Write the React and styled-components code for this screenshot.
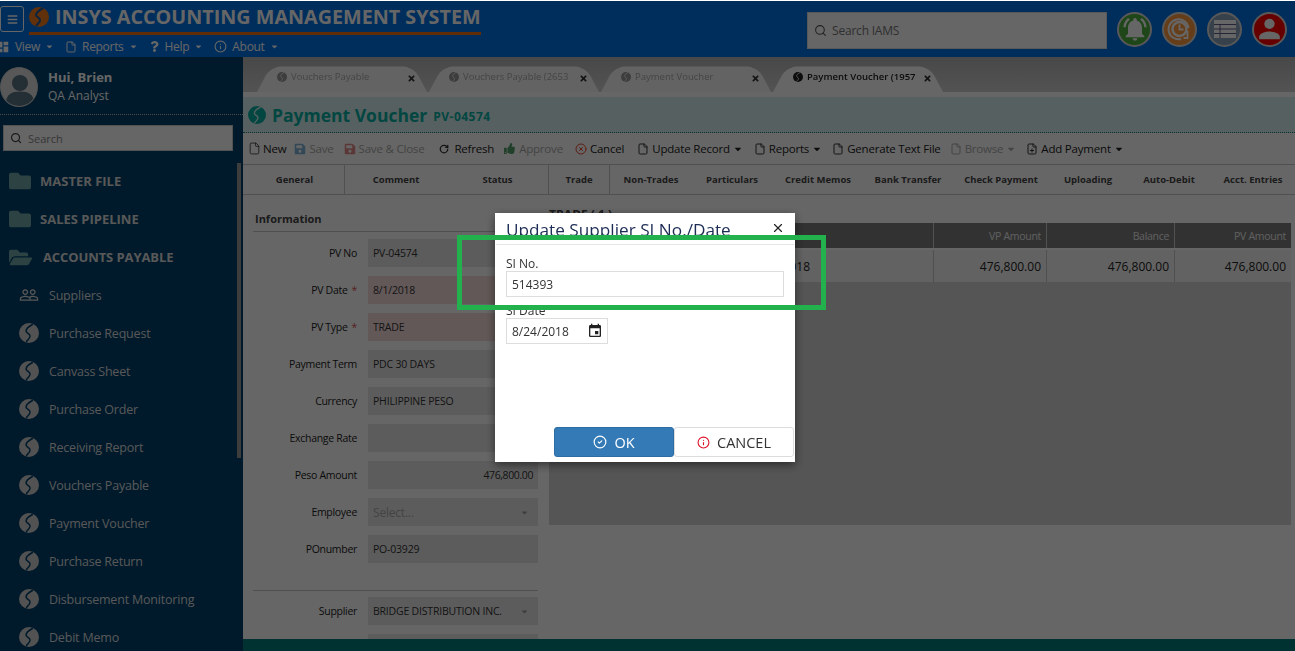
import React from "react"
import styled, { createGlobalStyle } from "styled-components"
import { MdDashboard, MdNotificationsActive, MdPerson, MdPeopleOutline, MdEvent } from "react-icons/md"
import { FaBars, FaFolder, FaFolderOpen, FaQuestion, FaSave, FaThumbsUp, FaTimes, FaCaretDown } from "react-icons/fa"
import { File, FilePlus, Info, Search, RotateCw, CircleX, CircleCheck, X } from "lucide-react"

const GlobalStyle = createGlobalStyle`
  html, body {
    margin: 0;
    padding: 0;
    height: 100%;
    overflow: hidden;
    font-family: "Open Sans", "Liberation Sans", sans-serif;
    background: #fff;
  }
  * { box-sizing: border-box; }
`

function Globe({ size = 14, color = "#4a7f8a", swoosh = "#fff", weight = 1.5 }) {
  return (
    <svg width={size} height={size} viewBox="0 0 20 20" style={{ flex: "none" }}>
      <circle cx="10" cy="10" r="10" fill={color} />
      <path
        d="M13.5 1.5 C9.5 3.5 6 6.5 7.5 9 C9 11 11.5 11 11 13.5 C10.7 15.5 9 16.5 7.5 18.5"
        fill="none"
        stroke={swoosh}
        strokeWidth={weight}
        strokeLinecap="round"
      />
    </svg>
  )
}

const docTabs = [
  { label: "Vouchers Payable" },
  { label: "Vouchers Payable (2653" },
  { label: "Payment Voucher" },
  { label: "Payment Voucher (1957", active: true },
]

const tools = [
  { label: "New", icon: <File size={13} color="#333" strokeWidth={1.5} />, gap: 8 },
  { label: "Save", icon: <FaSave size={12} color="#7fb3d9" />, muted: true, gap: 10 },
  { label: "Save & Close", icon: <FaSave size={12} color="#e58a8a" />, muted: true, gap: 15 },
  { label: "Refresh", icon: <RotateCw size={10} color="#333" strokeWidth={3} />, gap: 10 },
  { label: "Approve", icon: <FaThumbsUp size={11} color="#53a06b" />, muted: true, gap: 12 },
  { label: "Cancel", icon: <CircleX size={12} color="#e5482f" />, gap: 13 },
  { label: "Update Record", icon: <File size={12} color="#333" />, caret: true, gap: 11 },
  { label: "Reports", icon: <File size={12} color="#333" />, caret: true, gap: 10 },
  { label: "Generate Text File", icon: <File size={12} color="#333" />, gap: 9 },
  { label: "Browse", icon: <File size={12} color="#aaa" />, muted: true, caret: true, gap: 10 },
  { label: "Add Payment", icon: <FilePlus size={12} color="#333" />, caret: true, gap: 0 },
]

const sections = [
  { label: "General", width: 100, line: true },
  { label: "Comment", width: 102 },
  { label: "Status", width: 102, line: true },
  { label: "Trade", width: 61, active: true, line: true },
  { label: "Non-Trades", width: 82 },
  { label: "Particulars", width: 80 },
  { label: "Credit Memos", width: 92 },
  { label: "Bank Transfer", width: 88 },
  { label: "Check Payment", width: 98 },
  { label: "Uploading", width: 76 },
  { label: "Auto-Debit", width: 86 },
  { label: "Acct. Entries", width: 82 },
]

const fields = [
  { label: "PV No", value: "PV-04574" },
  { label: "PV Date", value: "8/1/2018", required: true },
  { label: "PV Type", value: "TRADE", required: true },
  { label: "Payment Term", value: "PDC 30 DAYS" },
  { label: "Currency", value: "PHILIPPINE PESO" },
  { label: "Exchange Rate", value: "" },
  { label: "Peso Amount", value: "476,800.00", right: true },
  { label: "Employee", value: "Select...", select: true, placeholder: true },
  { label: "POnumber", value: "PO-03929" },
]

const menuLinks = [
  "Purchase Request",
  "Canvass Sheet",
  "Purchase Order",
  "Receiving Report",
  "Vouchers Payable",
  "Payment Voucher",
  "Purchase Return",
  "Disbursement Monitoring",
  "Debit Memo",
]

export default function App() {
  return (
    <Page>
      <GlobalStyle />
      <Header>
        <HeaderLeft>
          <BrandRow>
            <MenuButton><FaBars size={11} color="#fff" /></MenuButton>
            <Brand>
              <Globe size={20} color="#f07a1c" swoosh="#1c5aa0" weight={2} />
              <BrandText>INSYS ACCOUNTING MANAGEMENT SYSTEM</BrandText>
            </Brand>
          </BrandRow>
          <TopNav>
            <NavItem $first><MdDashboard size={14} /> <span>View</span> <FaCaretDown size={9} /></NavItem>
            <NavItem><File size={12} /> <span>Reports</span> <FaCaretDown size={9} /></NavItem>
            <NavItem><FaQuestion size={11} /> <span>Help</span> <FaCaretDown size={9} /></NavItem>
            <NavItem><Info size={13} /> <span>About</span> <FaCaretDown size={9} /></NavItem>
          </TopNav>
        </HeaderLeft>
        <HeaderRight>
          <GlobalSearch>
            <Search size={13} color="#555" />
            <span>Search IAMS</span>
          </GlobalSearch>
          <RoundIcon $bg="#4baf3e"><MdNotificationsActive size={28} color="#fff" /></RoundIcon>
          <RoundIcon $bg="#ff9a40">
            <svg width="26" height="26" viewBox="0 0 26 26">
              <circle cx="12.5" cy="13" r="7" fill="none" stroke="#fff" strokeWidth="2.4" />
              <path d="M12.5 8.5 V13.5 H16.5" fill="none" stroke="#fff" strokeWidth="1.8" />
              <path d="M21.5 12 A10 10 0 1 0 14 23" fill="none" stroke="#fff" strokeWidth="2" />
              <path d="M20.5 15 V22 H16.5" fill="none" stroke="#fff" strokeWidth="1.8" />
            </svg>
          </RoundIcon>
          <RoundIcon $bg="#89a2bb">
            <svg width="22" height="18" viewBox="0 0 22 18">
              <rect width="22" height="18" fill="#fff" />
              <path d="M0 4.5 H22 M0 9 H22 M0 13.5 H22 M6 4.5 V18" stroke="#5a5f8a" strokeWidth="1" fill="none" />
            </svg>
          </RoundIcon>
          <RoundIcon $bg="#ff0000"><MdPerson size={32} color="#fff" /></RoundIcon>
        </HeaderRight>
      </Header>

      <Body>
        <Sidebar>
          <Profile>
            <Avatar>
              <svg width="38" height="40" viewBox="0 0 38 40">
                <circle cx="19" cy="15" r="8" fill="#5a7384" />
                <path d="M5 35 C5 26 11 23.5 19 23.5 C27 23.5 33 26 33 35 C29 39 9 39 5 35 Z" fill="#5a7384" />
              </svg>
            </Avatar>
            <div>
              <ProfileName>Hui, Brien</ProfileName>
              <ProfileRole>QA Analyst</ProfileRole>
            </div>
          </Profile>
          <SideSearch>
            <Search size={12} color="#444" strokeWidth={2.5} />
            <span>Search</span>
          </SideSearch>
          <SideMenu>
            <GroupItem><FaFolder size={22} color="#70a8a8" /><GroupLabel>MASTER FILE</GroupLabel></GroupItem>
            <GroupItem><FaFolder size={22} color="#70a8a8" /><GroupLabel>SALES PIPELINE</GroupLabel></GroupItem>
            <GroupItem><FaFolderOpen size={23} color="#70a8a8" /><GroupLabel $open>ACCOUNTS PAYABLE</GroupLabel></GroupItem>
            <LinkItem>
              <MdPeopleOutline size={20} color="#ddd" />
              <span>Suppliers</span>
            </LinkItem>
            {menuLinks.map((name) => (
              <LinkItem key={name}>
                <Globe size={20} color="#ccc" swoosh="#00416b" />
                <span>{name}</span>
              </LinkItem>
            ))}
          </SideMenu>
          <ScrollThumb />
        </Sidebar>

        <Main>
          <TabStrip>
            {docTabs.map((t) => (
              <DocTab key={t.label} $active={t.active}>
                <Globe size={10} color={t.active ? "#222" : "#999"} />
                <DocTabLabel $active={t.active}>{t.label}</DocTabLabel>
                <FaTimes size={9} color="#333" />
              </DocTab>
            ))}
          </TabStrip>
          <TitleBar>
            <Globe size={18} color="#06b0a5" swoosh="#d6f0f0" />
            <PageTitle>Payment Voucher</PageTitle>
            <PageCode>PV-04574</PageCode>
          </TitleBar>
          <Toolbar>
            {tools.map((t) => (
              <Tool key={t.label} $muted={t.muted} $gap={t.gap}>
                <ToolIcon>{t.icon}</ToolIcon>
                <span>{t.label}</span>
                {t.caret && <FaCaretDown size={10} />}
              </Tool>
            ))}
          </Toolbar>
          <SectionTabs>
            {sections.map((s) => (
              <SectionTab key={s.label} $width={s.width} $line={s.line} $active={s.active}>
                {s.label}
              </SectionTab>
            ))}
          </SectionTabs>
          <Content>
            <FormColumn>
              <FormHeading>Information</FormHeading>
              {fields.map((f) => (
                <FieldRow key={f.label}>
                  <FieldLabel>
                    {f.label}
                    {f.required && <Required>*</Required>}
                  </FieldLabel>
                  <FieldValue $required={f.required} $right={f.right} $placeholder={f.placeholder}>
                    {f.value}
                    {f.select && <FaCaretDown size={9} color="#999" />}
                  </FieldValue>
                </FieldRow>
              ))}
              <FormDivider />
              <FieldRow>
                <FieldLabel>Supplier</FieldLabel>
                <FieldValue>
                  BRIDGE DISTRIBUTION INC.
                  <FaCaretDown size={9} color="#999" />
                </FieldValue>
              </FieldRow>
              <FieldRow>
                <FieldLabel />
                <FieldValue />
              </FieldRow>
            </FormColumn>
            <TableColumn>
              <TableTitle>TRADE ( 1 )</TableTitle>
              <GridHead>
                <HeadCell $plain />
                <HeadCell />
                <HeadCell>VP Amount</HeadCell>
                <HeadCell>Balance</HeadCell>
                <HeadCell>PV Amount</HeadCell>
              </GridHead>
              <GridRow>
                <DataCell $plain>8/24/2018</DataCell>
                <DataCell />
                <DataCell>476,800.00</DataCell>
                <DataCell>476,800.00</DataCell>
                <DataCell>476,800.00</DataCell>
              </GridRow>
              <GridEmpty />
            </TableColumn>
          </Content>
          <Footer />
        </Main>
      </Body>

      <Backdrop />

      <Modal>
        <ModalHeader>
          <ModalTitle>Update Supplier SI No./Date</ModalTitle>
          <X size={14} color="#222" strokeWidth={2} />
        </ModalHeader>
        <ModalBody>
          <ModalLabel>SI No.</ModalLabel>
          <ModalInput>514393</ModalInput>
          <ModalLabel $second>SI Date</ModalLabel>
          <DateInput>
            8/24/2018
            <MdEvent size={16} color="#222" />
          </DateInput>
        </ModalBody>
        <ModalFooter>
          <PrimaryButton><CircleCheck size={14} /> OK</PrimaryButton>
          <GhostButton><Info size={13} color="#e0102a" /> CANCEL</GhostButton>
        </ModalFooter>
      </Modal>

      <Highlight />
    </Page>
  )
}

const Page = styled.div`
  position: relative;
  width: 100%;
  height: 100vh;
  overflow: hidden;
  display: flex;
  flex-direction: column;
  border-top: 1px solid #fff;
  background: #fff;
`

const Header = styled.header`
  flex: none;
  height: 56px;
  background: #0073e6;
  display: flex;
  justify-content: space-between;
  color: #fff;
`

const HeaderLeft = styled.div`
  display: flex;
  flex-direction: column;
`

const BrandRow = styled.div`
  display: flex;
  padding-top: 5px;
  gap: 5px;
`

const MenuButton = styled.div`
  width: 24px;
  height: 26px;
  border: 1px solid #fff;
  border-radius: 3px;
  display: flex;
  align-items: center;
  justify-content: center;
`

const Brand = styled.div`
  display: flex;
  align-items: center;
  gap: 6px;
  height: 29px;
  padding-bottom: 5px;
  border-bottom: 3px solid #f07010;
`

const BrandText = styled.div`
  font-size: 19.75px;
  font-weight: 700;
  color: #fff;
  line-height: 20px;
  white-space: nowrap;
`

const TopNav = styled.nav`
  display: flex;
  align-items: center;
  height: 24px;
  margin-top: 1px;
`

const NavItem = styled.div`
  display: flex;
  align-items: center;
  gap: 5px;
  font-size: 12px;
  letter-spacing: -0.3px;
  margin-left: ${(p) => (p.$first ? "-4px" : "11px")};
`

const HeaderRight = styled.div`
  display: flex;
  align-items: center;
  gap: 10px;
  padding: 0 8px 0 0;
`

const GlobalSearch = styled.div`
  width: 300px;
  height: 37px;
  margin-top: 3px;
  background: #fff;
  border: 1px solid #ddd;
  display: flex;
  align-items: center;
  gap: 5px;
  padding: 0 6px;
  font-size: 12px;
  letter-spacing: -0.2px;
  color: #777;
`

const RoundIcon = styled.div`
  width: 35px;
  height: 35px;
  border-radius: 50%;
  background: ${(p) => p.$bg};
  border: 2px solid #ddd;
  display: flex;
  align-items: center;
  justify-content: center;
  overflow: hidden;
`

const Body = styled.div`
  flex: 1;
  min-height: 0;
  display: flex;
`

const Sidebar = styled.aside`
  position: relative;
  flex: none;
  width: 243px;
  background: #00416b;
  color: #fff;
  overflow: hidden;
`

const Profile = styled.div`
  height: 58px;
  margin-bottom: 10px;
  display: flex;
  align-items: flex-start;
  gap: 10px;
  padding-top: 10px;
  border-bottom: 1px dotted #bbb;
`

const Avatar = styled.div`
  width: 38px;
  height: 40px;
  border-radius: 50%;
  background: #ddd;
  border: 1px solid #ccc;
  overflow: hidden;
  flex: none;
`

const ProfileName = styled.div`
  font-size: 13px;
  font-weight: 700;
  line-height: 18px;
  margin-top: 1px;
  color: #fff;
`

const ProfileRole = styled.div`
  font-size: 12px;
  line-height: 18px;
  margin-top: 1px;
  color: #fff;
`

const SideSearch = styled.div`
  width: 230px;
  height: 26px;
  margin-left: 3px;
  background: #fff;
  border: 1px solid #ccc;
  display: flex;
  align-items: center;
  gap: 6px;
  padding: 0 6px;
  font-size: 11px;
  color: #888;
`

const SideMenu = styled.div`
  display: flex;
  flex-direction: column;
  padding-top: 11px;
`

const GroupItem = styled.div`
  height: 38px;
  display: flex;
  align-items: center;
  padding-left: 9px;
  gap: 9px;
`

const GroupLabel = styled.span`
  font-size: 13px;
  font-weight: 700;
  letter-spacing: ${(p) => (p.$open ? "-0.1px" : "0")};
  color: #ddd;
  margin-left: ${(p) => (p.$open ? "2px" : "0")};
`

const LinkItem = styled.div`
  height: 38px;
  flex: none;
  display: flex;
  align-items: center;
  padding-left: 19px;
  gap: 10px;
  font-size: 12.5px;
  letter-spacing: -0.2px;
  color: #ddd;
`

const ScrollThumb = styled.div`
  position: absolute;
  right: 2px;
  top: 106px;
  width: 4px;
  height: 295px;
  background: #999;
`

const Main = styled.main`
  flex: 1;
  min-width: 0;
  display: flex;
  flex-direction: column;
  background: #fff;
`

const TabStrip = styled.div`
  flex: none;
  height: 35px;
  background: linear-gradient(#b4b4b4, #d0d0d0);
  display: flex;
  align-items: flex-end;
  padding-left: 14px;
  gap: 2px;
`

const DocTab = styled.div`
  position: relative;
  z-index: 0;
  width: 170px;
  height: 29px;
  display: flex;
  align-items: center;
  padding: 0 11px 2px 20px;
  gap: 4px;
  & > svg:last-child { margin-top: 4px; }
  &::before {
    content: "";
    position: absolute;
    z-index: -1;
    inset: -2px 0 0 0;
    background: ${(p) => (p.$active ? "#fff" : "#f8f8f8")};
    border-radius: 13px 13px 0 0;
    transform: perspective(34px) rotateX(12deg);
    transform-origin: bottom;
  }
`

const DocTabLabel = styled.span`
  flex: 1;
  font-size: 9.5px;
  white-space: nowrap;
  overflow: hidden;
  font-weight: ${(p) => (p.$active ? 600 : 400)};
  color: ${(p) => (p.$active ? "#222" : "#aaa")};
`

const TitleBar = styled.div`
  flex: none;
  height: 36px;
  margin-top: 5px;
  padding: 0 0 0 5px;
  display: flex;
  align-items: center;
  gap: 6px;
  background: #d6f0f0;
  border-bottom: 1px dotted #0f7a70;
`

const PageTitle = styled.div`
  font-size: 17.5px;
  font-weight: 700;
  color: #06b0a5;
`

const PageCode = styled.div`
  font-size: 12px;
  font-weight: 700;
  letter-spacing: 0.5px;
  color: #06b0a5;
  margin-top: 3px;
`

const Toolbar = styled.div`
  flex: none;
  height: 32px;
  display: flex;
  align-items: center;
  padding-left: 5px;
  border-bottom: 1px solid #c8c8c8;
`

const Tool = styled.div`
  display: flex;
  align-items: center;
  font-size: 11.5px;
  letter-spacing: -0.2px;
  margin-right: ${(p) => p.$gap}px;
  color: ${(p) => (p.$muted ? "#aaa" : "#222")};
  white-space: nowrap;
  & > svg { margin-left: 3px; }
`

const ToolIcon = styled.span`
  flex: none;
  width: 15px;
  display: flex;
  align-items: center;
`

const SectionTabs = styled.div`
  flex: none;
  height: 30px;
  display: flex;
  padding-left: 2px;
  border-bottom: 1px solid #c8c8c8;
`

const SectionTab = styled.div`
  width: ${(p) => p.$width}px;
  flex: none;
  display: flex;
  align-items: center;
  justify-content: center;
  font-size: 9.5px;
  font-weight: 700;
  color: #444;
  border-right: ${(p) => (p.$line ? "1px solid #c8c8c8" : "none")};
`

const Content = styled.div`
  flex: 1;
  min-height: 0;
  display: flex;
  overflow: hidden;
  padding: 0 4px 0 10px;
  gap: 11px;
`

const FormColumn = styled.div`
  flex: none;
  width: 285px;
`

const FormHeading = styled.div`
  height: 37px;
  margin-bottom: 7px;
  padding: 16px 0 0 2px;
  font-size: 11px;
  font-weight: 700;
  color: #444;
  border-bottom: 1px solid #c8c8c8;
`

const FieldRow = styled.div`
  display: flex;
  gap: 11px;
  height: 28px;
  margin-bottom: 9px;
`

const FieldLabel = styled.div`
  width: 104px;
  flex: none;
  display: flex;
  justify-content: flex-end;
  align-items: center;
  font-size: 10.5px;
  letter-spacing: -0.3px;
  color: #222;
  white-space: nowrap;
`

const Required = styled.span`
  color: #d9534f;
  margin-left: 4px;
`

const FieldValue = styled.div`
  flex: 1;
  display: flex;
  align-items: center;
  justify-content: ${(p) => (p.$right ? "flex-end" : "space-between")};
  padding: 0 5px;
  padding-right: ${(p) => (p.$right ? "5px" : "9px")};
  font-size: ${(p) => (p.$placeholder ? "12px" : "10.5px")};
  letter-spacing: ${(p) => (p.$right ? "-0.4px" : "-0.2px")};
  color: ${(p) => (p.$placeholder ? "#aaa" : "#333")};
  background: ${(p) => (p.$required ? "#f8dcdc" : "#e6e6e6")};
  white-space: nowrap;
`

const FormDivider = styled.div`
  height: 1px;
  margin: 27px 0 6px;
  background: #c8c8c8;
`

const TableColumn = styled.div`
  flex: 1;
  min-width: 0;
  display: flex;
  flex-direction: column;
`

const TableTitle = styled.div`
  height: 28px;
  padding-top: 11px;
  font-size: 12px;
  font-weight: 700;
  color: #444;
`

const cols = "266px 119px 113px 128px 116px"

const GridHead = styled.div`
  display: grid;
  grid-template-columns: ${cols};
  height: 25px;
  background: #7d7d7d;
`

const HeadCell = styled.div`
  display: flex;
  align-items: center;
  justify-content: flex-end;
  padding-right: 5px;
  font-size: 10.5px;
  letter-spacing: -0.3px;
  color: #eee;
  border-right: ${(p) => (p.$plain ? "none" : "1px solid #ccc")};
  &:last-child { border-right: none; }
`

const GridRow = styled.div`
  display: grid;
  grid-template-columns: ${cols};
  height: 32px;
  margin-top: 2px;
  background: #f4f4f4;
`

const DataCell = styled.div`
  display: flex;
  align-items: center;
  justify-content: flex-end;
  padding-right: 5px;
  font-size: 12px;
  color: #222;
  border-right: ${(p) => (p.$plain ? "none" : "1px solid #c8c8c8")};
  &:last-child { border-right: none; }
`

const GridEmpty = styled.div`
  height: 243px;
  background: #d4d4d4;
`

const Footer = styled.footer`
  flex: none;
  height: 12px;
  background: #007d7d;
`

const Backdrop = styled.div`
  position: absolute;
  inset: 0;
  background: rgba(0, 0, 0, 0.6);
`

const Modal = styled.div`
  position: absolute;
  left: 495px;
  top: 212px;
  width: 300px;
  height: 249px;
  background: #fff;
  box-shadow: 0 3px 9px rgba(0, 0, 0, 0.5);
  display: flex;
  flex-direction: column;
`

const ModalHeader = styled.div`
  flex: none;
  height: 32px;
  margin: 0 1px;
  padding: 0 9px 0 10px;
  display: flex;
  align-items: flex-start;
  justify-content: space-between;
  border-bottom: 1px solid #e5e5e5;
  overflow: hidden;
  & > svg { margin-top: 8px; }
`

const ModalTitle = styled.div`
  font-size: 17.2px;
  line-height: 24px;
  margin-top: 5px;
  color: #1c2c55;
  white-space: nowrap;
`

const ModalBody = styled.div`
  flex: 1;
  padding: 10px 11px 0;
`

const ModalLabel = styled.div`
  font-size: 12px;
  line-height: 18px;
  margin-bottom: -2px;
  color: #333;
  margin-top: ${(p) => (p.$second ? "5px" : "0")};
`

const ModalInput = styled.div`
  height: 26px;
  border: 1px solid #ddd;
  padding: 0 5px;
  display: flex;
  align-items: center;
  font-size: 12px;
  color: #333;
`

const DateInput = styled(ModalInput)`
  width: 102px;
  justify-content: space-between;
  padding-right: 4px;
`

const ModalFooter = styled.div`
  flex: none;
  display: flex;
  justify-content: flex-end;
  padding: 0 1px 5px 0;
`

const PrimaryButton = styled.div`
  width: 120px;
  height: 30px;
  display: flex;
  align-items: center;
  justify-content: center;
  gap: 7px;
  font-size: 14.5px;
  color: #fff;
  background: #337ab7;
  border: 1px solid #2e6da4;
  border-radius: 3px;
`

const GhostButton = styled(PrimaryButton)`
  color: #333;
  background: #fff;
  border-color: #ddd;
`

const Highlight = styled.div`
  position: absolute;
  left: 457px;
  top: 234px;
  width: 369px;
  height: 75px;
  border: 5px solid #22b14c;
`
